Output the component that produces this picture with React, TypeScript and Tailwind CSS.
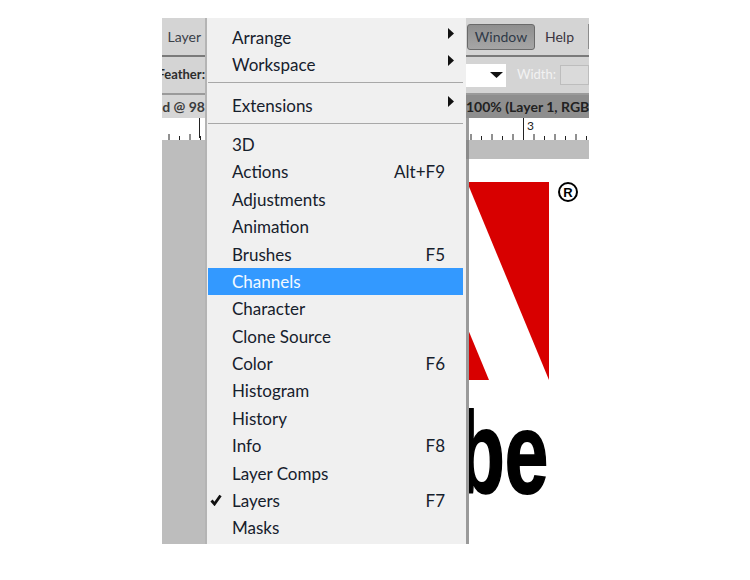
const MENU_FONT = "font-['Lato',sans-serif]";

type Item = { label: string; shortcut?: string; active?: boolean; checked?: boolean };

const panels: Item[] = [
  { label: '3D' },
  { label: 'Actions', shortcut: 'Alt+F9' },
  { label: 'Adjustments' },
  { label: 'Animation' },
  { label: 'Brushes', shortcut: 'F5' },
  { label: 'Channels', active: true },
  { label: 'Character' },
  { label: 'Clone Source' },
  { label: 'Color', shortcut: 'F6' },
  { label: 'Histogram' },
  { label: 'History' },
  { label: 'Info', shortcut: 'F8' },
  { label: 'Layer Comps' },
  { label: 'Layers', shortcut: 'F7', checked: true },
  { label: 'Masks' },
];

function Arrow() {
  return (
    <svg width="6" height="11" viewBox="0 0 6 11" className="absolute right-[12px] top-[4px]">
      <path d="M0 0 L6 5.5 L0 11 Z" fill="#111" />
    </svg>
  );
}

function SubmenuRow({ label }: { label: string }) {
  return (
    <div className="relative h-[27px] pl-[25px] text-[17px] leading-[27px] text-[#16202c]">
      {label}
      <Arrow />
    </div>
  );
}

function PanelRow({ item }: { item: Item }) {
  return (
    <div
      className={`relative ml-[1px] mr-[3px] flex h-[27.4px] items-center justify-between pl-[24px] pr-[18px] text-[17px] ${
        item.active ? 'bg-[#3399ff] text-[#f4f9ff]' : 'text-[#16202c]'
      }`}
    >
      {item.checked && (
        <svg width="12" height="12" viewBox="0 0 12 12" className="absolute left-[2px] top-[7px]">
          <path d="M1.5 6.5 L4.5 10 L10.5 1.5" fill="none" stroke="#111" strokeWidth="2.8" />
        </svg>
      )}
      <span>{item.label}</span>
      {item.shortcut && <span>{item.shortcut}</span>}
    </div>
  );
}

function Menu() {
  return (
    <div className={`h-full w-[261px] shrink-0 border-l-2 border-[#b4b4b4] bg-[#f0f0f0] pt-[6px] ${MENU_FONT}`}>
      <SubmenuRow label="Arrange" />
      <SubmenuRow label="Workspace" />
      <div className="mt-[4px] mb-[9px] ml-[1px] mr-[3px] h-px bg-[#a8a8a8]" />
      <SubmenuRow label="Extensions" />
      <div className="mt-[4px] mb-[7px] ml-[1px] mr-[3px] h-px bg-[#a8a8a8]" />
      {panels.map((item) => (
        <PanelRow key={item.label} item={item} />
      ))}
    </div>
  );
}

function RulerTicks({ offset }: { offset: number }) {
  const ticks = Array.from({ length: 12 }, (_, i) => offset + i * 10.5);
  return (
    <svg width="122" height="8" viewBox="0 0 122 8" className="block shrink-0">
      {ticks.map((x, i) => (
        <line key={x} x1={x} x2={x} y1={i % 2 ? 4 : 2} y2="8" stroke="#222" />
      ))}
    </svg>
  );
}

function LeftColumn() {
  return (
    <div className="flex h-full w-[43px] shrink-0 flex-col overflow-hidden bg-[#bdbdbd] font-['Lato',sans-serif]">
      <div className="flex h-[39px] shrink-0 items-center justify-end border-b-2 border-[#7a7a7a] bg-[#d4d4d4] pr-[4px] text-[14px] text-[#3a4048]">
        Layer
      </div>
      <div className="flex h-[38px] shrink-0 items-center justify-end overflow-hidden whitespace-nowrap border-b-2 border-[#9a9a9a] bg-[#d4d4d4] text-[13px] font-bold text-[#2d2d2d]">
        Feather:
      </div>
      <div className="flex h-[23px] shrink-0 items-center justify-end whitespace-nowrap bg-[#d6d6d6] text-[14px] font-bold text-[#3c3c3c]">
        d @ 98
      </div>
      <div className="relative flex h-[22px] shrink-0 items-end justify-end overflow-hidden bg-white">
        <div className="absolute right-[5px] top-0 h-[20px] w-px bg-[#222]" />
        <RulerTicks offset={2} />
      </div>
    </div>
  );
}

function RightColumn() {
  return (
    <div className="flex h-full min-w-0 flex-1 flex-col overflow-hidden bg-white font-['Lato',sans-serif]">
      <div className="flex h-[39px] shrink-0 items-center border-b-2 border-[#7a7a7a] bg-[#d4d4d4] pl-[1px] text-[14px] text-[#2f3a48]">
        <div className="flex h-[26px] w-[68px] shrink-0 items-center justify-center rounded-[3px] border border-[#6a6a6a] bg-linear-to-b from-[#8f8f8f] to-[#a6a6a6]">
          Window
        </div>
        <span className="ml-[10px] text-[#3a3440]">Help</span>
        <div className="ml-auto h-[25px] w-px bg-[#8c8c8c]" />
      </div>
      <div className="flex h-[38px] shrink-0 items-center border-b-2 border-[#9a9a9a] bg-[#d4d4d4]">
        <div className="flex h-[23px] w-[40px] shrink-0 items-center justify-end bg-white pr-[3px]">
          <svg width="13" height="6" viewBox="0 0 13 6">
            <path d="M0 0 H13 L6.5 6 Z" fill="#111" />
          </svg>
        </div>
        <span className="ml-[11px] text-[13px] text-[#f2f2f2]">Width:</span>
        <div className="ml-[4px] h-[20px] flex-1 border border-[#bdbdbd] bg-[#dadada]" />
      </div>
      <div className="flex h-[23px] shrink-0 items-center whitespace-nowrap bg-[#8e8e8e] text-[14px] font-bold text-[#222]">
        100% (Layer 1, RGB
      </div>
      <div className="relative h-[22px] shrink-0 overflow-hidden border-l-[3px] border-[#9a9a9a] bg-white">
        <span className="absolute left-[58px] top-[1px] text-[12px] leading-[13px] text-[#222]">3</span>
        <div className="absolute left-[54px] top-0 h-[20px] w-px bg-[#222]" />
        <div className="absolute bottom-0 left-0">
          <RulerTicks offset={2} />
        </div>
      </div>
      <div className="h-[19px] shrink-0 border-l-[3px] border-[#8a8a8a] bg-[#bdbdbd]" />
      <div className="relative min-h-0 flex-1 overflow-hidden border-l-[3px] border-[#9a9a9a] bg-white">
        <svg width="120" height="385" viewBox="0 0 120 385" className="absolute left-0 top-0">
          <path d="M-2 23 H80 V221 Z" fill="#d80000" />
          <path d="M-2 168 L20 221 H-2 Z" fill="#d80000" />
        </svg>
        <div className="absolute right-[11px] top-[23px] flex h-[20px] w-[20px] items-center justify-center rounded-full border-2 border-black text-[13px] font-bold leading-none text-black font-['Liberation_Sans',sans-serif]">
          R
        </div>
        <span className="absolute right-[41px] top-[237px] origin-right scale-x-[0.68] text-[115px] font-bold leading-none text-black [-webkit-text-stroke:2px_black] font-['Liberation_Sans',sans-serif]">
          be
        </span>
      </div>
    </div>
  );
}

export default function App() {
  return (
    <div className="h-[580px] w-[750px] overflow-hidden bg-white pl-[162px] pt-[18px]">
      <div className="flex h-[526px] w-[427px]">
        <LeftColumn />
        <Menu />
        <RightColumn />
      </div>
    </div>
  );
}
